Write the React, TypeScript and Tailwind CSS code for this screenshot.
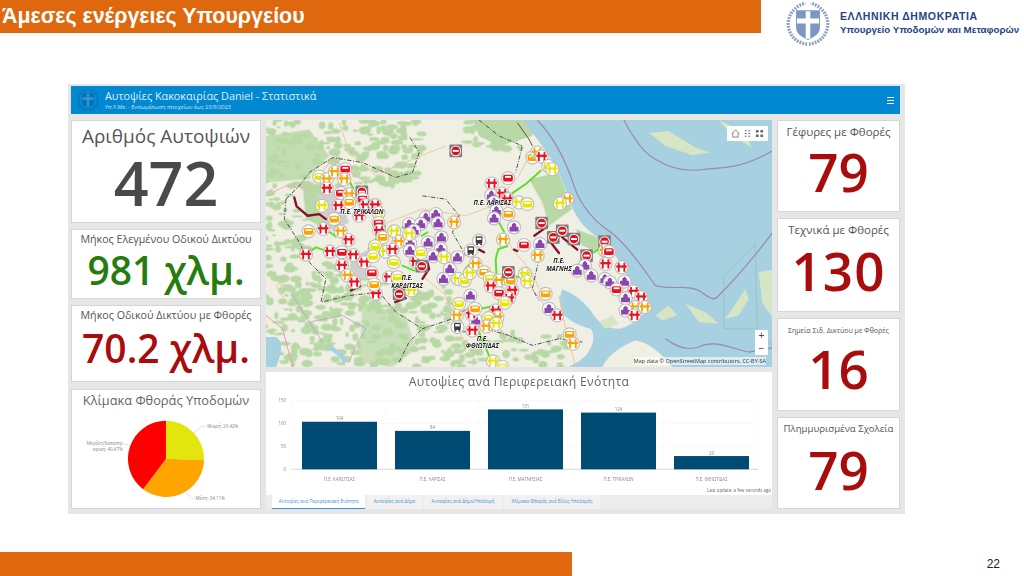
import React from 'react';

const sans = "font-['Open_Sans','Noto_Sans',sans-serif]";

// [x, y, type] in map pixels x3 (r bridge, R closed road, y yellow, o orange, p purple school, g bus)
const MARKERS: [number, number, string][] = [
  [160,182,'y'],[182,190,'o'],[207,168,'o'],[238,160,'r'],[235,190,'o'],[183,218,'r'],[225,232,'r'],[250,235,'o'],[288,228,'R'],[290,250,'r'],
  [168,270,'y'],[218,270,'r'],[250,260,'o'],[300,268,'r'],[328,268,'r'],[205,310,'o'],[338,292,'y'],[280,300,'r'],[128,347,'o'],[172,340,'r'],
  [224,347,'o'],[338,322,'r'],[340,345,'r'],[385,347,'y'],[350,365,'o'],[248,373,'r'],[398,378,'o'],[328,392,'y'],[192,408,'r'],[120,417,'r'],
  [228,410,'r'],[262,418,'r'],[295,440,'r'],[322,422,'y'],[360,408,'y'],[380,402,'r'],[384,440,'y'],[228,450,'r'],[245,480,'o'],[318,472,'r'],
  [370,485,'r'],[265,500,'r'],[395,485,'y'],[400,535,'R'],[330,535,'r'],[325,507,'o'],[437,525,'y'],[450,438,'r'],[468,452,'R'],
  [430,325,'p'],[480,305,'p'],[510,295,'p'],[517,322,'p'],[465,325,'p'],[445,345,'p'],[433,383,'p'],[487,380,'p'],[527,365,'p'],[432,405,'p'],
  [525,400,'p'],[502,422,'p'],[575,425,'p'],[552,460,'p'],[533,490,'p'],[614,540,'p'],[630,615,'p'],
  [465,412,'y'],[535,425,'y'],[577,490,'y'],[597,495,'y'],[612,473,'y'],[630,445,'o'],[655,470,'o'],[565,320,'o'],[430,355,'y'],[640,375,'g'],[615,405,'g'],
  [570,105,'R'],[800,125,'o'],[815,110,'o'],[828,122,'r'],[848,150,'y'],[860,160,'y'],[678,203,'r'],[727,187,'r'],[677,238,'p'],[710,233,'r'],
  [685,260,'p'],[725,250,'r'],[760,260,'y'],[785,265,'y'],[692,285,'p'],[685,308,'p'],[728,295,'o'],[905,250,'o'],[883,263,'y'],
  [828,322,'R'],[745,335,'p'],[712,372,'o'],[775,388,'r'],[823,385,'p'],[816,420,'o'],[863,365,'R'],[890,345,'R'],[925,370,'R'],[963,420,'R'],
  [1017,378,'R'],[1018,405,'o'],[1030,408,'r'],[1020,445,'r'],[1068,455,'r'],[958,450,'p'],[935,465,'p'],[977,480,'p'],[1018,490,'p'],[1033,500,'p'],
  [1077,498,'p'],[1053,522,'r'],[1105,528,'r'],[1127,545,'r'],[1080,548,'p'],[1110,575,'o'],[1138,575,'o'],[1080,585,'p'],[1107,600,'r'],
  [778,475,'y'],[672,488,'y'],[700,495,'o'],[785,498,'y'],[735,495,'o'],[728,470,'R'],[675,512,'r'],[700,533,'r'],[740,525,'r'],[730,548,'r'],
  [717,562,'y'],[690,585,'r'],[695,605,'o'],[668,608,'y'],[662,633,'o'],[692,625,'y'],[840,535,'o'],[850,580,'p'],[875,600,'r'],[580,565,'y'],
  [573,600,'o'],[617,595,'r'],[628,580,'o'],[620,645,'r'],[575,635,'g'],[912,657,'o'],[922,685,'o'],[682,738,'y'],[710,755,'y'],
];

const MARKER_COLORS: Record<string, string> = { r: '#f00f1c', R: '#e0101c', y: '#e6e600', o: '#fca400', p: '#8e44ad', g: '#3c3c3c' };

const GREEN_LINES = [
  'M250 195 L262 218', 'M345 310 L358 332', 'M332 368 L308 398', 'M135 405 L150 395 L178 405', 'M185 345 L210 362', 'M410 335 L425 342',
  'M410 450 L445 465', 'M468 360 L485 350', 'M598 460 L610 448', 'M692 472 L690 430 L698 400 L725 392', 'M700 320 L715 348', 'M740 232 L780 205 L825 165',
  'M720 478 L762 485', 'M645 580 L680 572', 'M640 650 L672 725', 'M985 410 L1000 400', 'M1098 550 L1110 540',
];

const RED_LINES = [
  'M85 245 L92 272 L125 300 L160 295 L180 310', 'M255 525 L282 512', 'M388 560 L420 548', 'M806 360 L845 332', 'M855 380 L880 412',
  'M890 365 L935 402', 'M485 440 L490 460 L470 490', 'M640 402 L655 410', 'M745 402 L755 406',
];

// forest specks, same every render
function makePatches() {
  let seed = 7;
  const rnd = () => {
    seed = (seed * 16807) % 2147483647;
    return seed / 2147483647;
  };
  const areas = [
    { x: 0, y: 12, w: 470, h: 200, n: 170 },
    { x: 0, y: 200, w: 130, h: 300, n: 70 },
    { x: 0, y: 500, w: 560, h: 255, n: 260 },
    { x: 600, y: 12, w: 200, h: 90, n: 50 },
    { x: 560, y: 640, w: 350, h: 115, n: 50 },
    { x: 130, y: 440, w: 170, h: 90, n: 40 },
  ];
  const out: { x: number; y: number; rx: number; ry: number }[] = [];
  for (const a of areas) {
    for (let i = 0; i < a.n; i++) {
      out.push({ x: a.x + rnd() * a.w, y: a.y + rnd() * a.h, rx: 5 + rnd() * 14, ry: 3 + rnd() * 9 });
    }
  }
  return out;
}
const PATCHES = makePatches();

function MapMarker({ x, y, type, i }: { x: number; y: number; type: string; i: number }) {
  const c = MARKER_COLORS[type];
  if (type === 'R') {
    return (
      <g>
        <rect x={x - 19} y={y - 19} width="38" height="38" rx="3" fill="#7e7e7e" />
        <circle cx={x} cy={y} r="16" fill="#fff" />
        <circle cx={x} cy={y} r="13" fill={c} />
        <rect x={x - 9} y={y - 3} width="18" height="6" fill="#fff" />
      </g>
    );
  }
  const carStyle = type !== 'p' && type !== 'g' && i % 3 === 0;
  return (
    <g transform={`translate(${x} ${y}) scale(1.12)`}>
      <circle r="19" fill="#bdbdbd" />
      <circle r="16" fill="#fff" />
      {type === 'p' && (
        <path d="M-12 11 v-13 h6 v-6 l6 -5 l6 5 v6 h6 v13 z" fill={c} />
      )}
      {type === 'g' && (
        <g>
          <rect x="-9" y="-12" width="18" height="20" rx="3" fill={c} />
          <rect x="-6" y="-8" width="12" height="6" fill="#fff" />
          <rect x="-8" y="8" width="5" height="4" fill={c} />
          <rect x="3" y="8" width="5" height="4" fill={c} />
        </g>
      )}
      {carStyle && (
        <g>
          <rect x="-13" y="-9" width="26" height="18" rx="5" fill={c} />
          <rect x="-8" y="-6" width="16" height="5" fill="#fff" />
        </g>
      )}
      {type !== 'p' && type !== 'g' && !carStyle && (
        <g fill={c}>
          <rect x="-14" y="-5" width="28" height="6" />
          <rect x="-10" y="-12" width="5" height="24" />
          <rect x="5" y="-12" width="5" height="24" />
        </g>
      )}
    </g>
  );
}

function ThessalyMap() {
  return (
    <svg viewBox="0 12 1520 743" preserveAspectRatio="none" className="w-full h-full block blur-[0.5px]">
      <defs>
        <filter id="soft"><feGaussianBlur stdDeviation="2" /></filter>
      </defs>
      <rect x="0" y="0" width="1530" height="770" fill="#f0efe4" />
      {/* forests */}
      <g fill="#b8d8a6" filter="url(#soft)">
        <path d="M110 210 L180 200 L240 320 L180 340 L120 310 Z" />
        <path d="M0 60 L130 40 L190 120 L120 190 L0 200 Z" opacity="0.8" />
        <path d="M620 12 L770 12 L800 60 L700 90 L640 60 Z" />
        <path d="M790 190 L880 170 L920 280 L850 330 L830 260 Z" />
        <path d="M930 340 L1010 370 L1000 410 L950 390 Z" />
        <path d="M290 560 L420 600 L450 700 L380 755 L280 740 Z" opacity="0.7" />
        {PATCHES.map((p, i) => <ellipse key={i} cx={p.x} cy={p.y} rx={p.rx} ry={p.ry} />)}
      </g>
      {/* sea */}
      <path
        d="M770 12 C800 50 850 110 880 170 C900 220 915 260 925 285 C945 330 985 360 1010 372 C1040 395 1075 460 1100 510 C1120 540 1150 560 1150 572 C1140 600 1090 635 1060 640 C1030 640 1000 622 985 600 C965 565 920 530 890 522 C880 545 880 570 890 590 C905 615 945 632 975 640 C990 660 985 690 960 722 C940 740 920 748 910 755 L1530 755 L1530 12 Z"
        fill="#a7d0e0"
      />
      <path d="M1010 755 C1030 715 1070 690 1110 675 C1150 680 1190 715 1220 755 Z" fill="#f0efe4" />
      <path d="M0 665 L30 665 C55 680 45 720 30 755 L0 755 Z" fill="#a7d0e0" />
      <path d="M185 690 C210 695 225 710 240 725 L235 755 L225 730 C210 715 195 705 185 700 Z" fill="#a7d0e0" />
      {/* islands */}
      <g fill="#d6e5c4">
        <path d="M1150 50 L1210 45 L1290 95 L1335 110 L1280 118 L1200 90 Z" />
        <path d="M1360 12 L1440 50 L1460 95 L1400 60 Z" />
        <path d="M1260 565 L1320 590 L1360 625 L1300 620 Z" />
        <path d="M1170 600 L1210 570 L1235 600 L1190 615 Z" />
        <path d="M1380 610 L1440 520 L1450 550 L1420 600 Z" />
        <path d="M1000 620 L1040 600 L1060 625 L1020 640 Z" />
        <path d="M1480 470 L1530 460 L1530 620 L1490 560 Z" />
      </g>
      {/* sea boundaries */}
      <g fill="none" stroke="#9c86b6" strokeWidth="3.5">
        <path d="M815 12 C860 60 900 130 925 210 C945 270 990 320 1030 345 C1090 390 1140 470 1170 510 C1210 525 1260 505 1300 525 C1330 545 1345 560 1360 540 C1410 490 1470 420 1530 340" />
        <path d="M1075 12 C1100 60 1130 110 1170 130 C1210 155 1260 170 1320 160 C1370 155 1430 160 1530 100" />
        <path d="M1200 670 C1240 700 1270 705 1300 695 C1350 670 1400 700 1450 710 L1530 695" />
      </g>
      <path d="M1375 480 L1470 385 L1475 640 L1375 640 Z M1475 640 L1530 700" fill="none" stroke="#8fb8a0" strokeWidth="1.5" />
      {/* roads */}
      <g fill="none" stroke="#efc7a0" strokeWidth="3">
        <path d="M0 240 L60 210 L130 215 L200 130 L300 200" stroke="#eeb0a8" />
        <path d="M340 330 L470 280 L600 300 L680 270 L760 180 L800 100" />
        <path d="M700 320 L740 400 L800 470 L820 520" />
        <path d="M470 480 L540 540 L560 610 L620 720" />
        <path d="M0 600 L50 640 L80 755" stroke="#e8a0a8" />
        <path d="M880 540 L900 640 L930 755" />
        <path d="M220 20 L250 110 L330 180 L440 130 L540 90" />
        <path d="M90 480 L30 510 L60 560" />
        <path d="M860 600 L800 520" />
      </g>
      <g fill="none" stroke="#b5a8c4" strokeWidth="2.5">
        <path d="M130 620 L230 600 L300 640 L270 690 L250 740" />
        <path d="M80 540 L130 620 L170 680" />
      </g>
      {/* region borders */}
      <g fill="none" stroke="#4d4d4d" strokeWidth="3" strokeDasharray="13 5 3 5">
        <path d="M60 250 L100 210 L130 170 L200 125 L290 140 L390 185 L440 170 L460 110 L430 60" />
        <path d="M60 250 L55 310 L100 380 L130 440 L180 490 L165 560 L250 540 L340 530 L390 590 L470 640 L560 610 L630 560" />
        <path d="M470 240 L540 250 L580 300 L560 350 L600 420" />
        <path d="M640 12 L700 60 L770 90 L750 170" />
        <path d="M560 610 L590 650 L660 640 L730 660 L800 690 L880 670 L950 680" />
        <path d="M400 740 L430 680 L470 640" />
        <path d="M820 430 L800 520 L820 555" />
      </g>
      <path d="M755 20 L790 70 L800 90" fill="none" stroke="#6b4a4a" strokeWidth="3" />
      {/* gray urban areas */}
      <g fill="#cfcfcf">
        <path d="M150 240 L210 225 L250 320 L200 345 L165 300 Z" />
        <path d="M250 430 L310 400 L320 480 L270 490 Z" />
      </g>
      <g fill="none" stroke="#5de02a" strokeWidth="6" strokeLinecap="round">
        {GREEN_LINES.map((d) => <path key={d} d={d} />)}
      </g>
      <g fill="none" stroke="#8a0f2c" strokeWidth="7" strokeLinecap="round" strokeLinejoin="round">
        {RED_LINES.map((d) => <path key={d} d={d} />)}
      </g>
      {MARKERS.map(([x, y, type], i) => <MapMarker key={i} x={x} y={y} type={type} i={i} />)}
      <g fontFamily="'Open Sans', sans-serif" fontSize="19" fontWeight="700" fontStyle="italic" fill="#222" textAnchor="middle" stroke="#fff" strokeWidth="3" paintOrder="stroke">
        <text x="288" y="296">Π.Ε. ΤΡΙΚΑΛΩΝ</text>
        <text x="680" y="268">Π.Ε. ΛΑΡΙΣΑΣ</text>
        <text x="880" y="443">Π.Ε.</text>
        <text x="880" y="466">ΜΑΓΝΗΣ</text>
        <text x="424" y="493">Π.Ε.</text>
        <text x="424" y="516">ΚΑΡΔΙΤΣΑΣ</text>
        <text x="650" y="676">Π.Ε.</text>
        <text x="650" y="699">ΦΘΙΩΤΙΔΑΣ</text>
      </g>
    </svg>
  );
}

function EmblemLogo({ size, wreath, shield, cross }: { size: number; wreath: string; shield: string; cross: string }) {
  return (
    <svg width={size} height={size} viewBox="0 0 48 48" className="shrink-0">
      <g fill="none" stroke={wreath} strokeWidth="3.6" strokeDasharray="2 1.2">
        <path d="M23 46 C8 44 2 33 2.5 22 C3 12 12 3 21 1.5" />
        <path d="M25 46 C40 44 46 33 45.5 22 C45 12 36 3 27 1.5" />
      </g>
      <path d="M11 9 H37 V28 C37 35 30 38 24 41.5 C18 38 11 35 11 28 Z" fill={shield} />
      <path d="M21.5 10 H26.5 V18 H36 V23.5 H26.5 V40 H21.5 V23.5 H12 V18 H21.5 Z" fill={cross} />
    </svg>
  );
}

function StatCard({ title, value, titleClass, valueClass, heightClass }: {
  title: string; value: string; titleClass: string; valueClass: string; heightClass: string;
}) {
  return (
    <div className={`bg-white border border-[#d6d6d6] flex flex-col items-center overflow-hidden whitespace-nowrap ${heightClass}`}>
      <div className={`text-[#555] ${sans} ${titleClass}`}>{title}</div>
      <div className={`font-['Open_Sans',sans-serif] font-semibold ${valueClass}`}>{value}</div>
    </div>
  );
}

function DamagePie() {
  // slices from the top, clockwise: yellow, orange, red
  const cx = 95, cy = 70, r = 38.7;
  const pt = (deg: number) => {
    const a = ((deg - 90) * Math.PI) / 180;
    return `${(cx + r * Math.cos(a)).toFixed(2)} ${(cy + r * Math.sin(a)).toFixed(2)}`;
  };
  const slice = (a: number, b: number) => `M${cx} ${cy} L${pt(a)} A${r} ${r} 0 ${b - a > 180 ? 1 : 0} 1 ${pt(b)} Z`;
  return (
    <svg viewBox="0 0 190 120" className="absolute inset-0 w-full h-full">
      <path d={slice(0, 92)} fill="#e3e60c" />
      <path d={slice(92, 217)} fill="#ffa500" />
      <path d={slice(217, 360)} fill="#ff0000" />
      <g fill="none" stroke="#ccc" strokeWidth="0.6">
        <path d="M123 44 L131 37 L136 37" />
        <path d="M115 103 L120 110 L124 110" />
        <path d="M57 56 L52 55" />
      </g>
      <g fontFamily="'Open Sans', sans-serif" fontSize="4.6" fill="#888">
        <text x="137" y="39">Μικρή: 26.42%</text>
        <text x="125" y="112">Μέση: 34.11%</text>
        <text x="51" y="56" textAnchor="end">Μεγάλη/Καταστρ</text>
        <text x="51" y="62" textAnchor="end">οφική: 40.47%</text>
      </g>
    </svg>
  );
}

const BARS = [
  { label: 'Π.Ε. ΚΑΡΔΙΤΣΑΣ', value: 104, x: 36 },
  { label: 'Π.Ε. ΛΑΡΙΣΑΣ', value: 84, x: 129 },
  { label: 'Π.Ε. ΜΑΓΝΗΣΙΑΣ', value: 131, x: 222 },
  { label: 'Π.Ε. ΤΡΙΚΑΛΩΝ', value: 124, x: 315 },
  { label: 'Π.Ε. ΦΘΙΩΤΙΔΑΣ', value: 29, x: 408 },
];

function BarChart() {
  const base = 97.3;
  const scale = 68.6 / 150;
  return (
    <svg viewBox="0 0 506 123" className="absolute inset-0 w-full h-full">
      <g stroke="#ececec" strokeWidth="0.6">
        {[28.7, 51.6, 74.4].map((y) => <line key={y} x1="25" x2="492" y1={y} y2={y} strokeDasharray="1 1" />)}
        {[25, 119, 212, 305, 398, 492].map((x) => <line key={x} x1={x} x2={x} y1="28.7" y2={base} strokeDasharray="1 1" />)}
      </g>
      <line x1="25" x2="492" y1={base} y2={base} stroke="#bbb" strokeWidth="0.6" />
      <g fontFamily="'Open Sans', sans-serif" fontSize="4.4" fill="#888">
        {[[150, 28.7], [100, 51.6], [50, 74.4], [0, 97.3]].map(([t, y]) => (
          <text key={t} x="20" y={y + 1.5} textAnchor="end">{t}</text>
        ))}
        {BARS.map((b) => (
          <g key={b.label}>
            <rect x={b.x} y={base - b.value * scale} width="75" height={b.value * scale} fill="#004b73" />
            <text x={b.x + 37.5} y={base - b.value * scale - 1.5} textAnchor="middle">{b.value}</text>
            <text x={b.x + 37.5} y="108.5" textAnchor="middle">{b.label}</text>
          </g>
        ))}
        <text x="505" y="120" textAnchor="end" fill="#666">Last update: a few seconds ago</text>
      </g>
    </svg>
  );
}

const TABS = [
  { label: 'Αυτοψίες ανά Περιφερειακή Ενότητα', w: 'w-[93px]', active: true },
  { label: 'Αυτοψίες ανά Δήμο', w: 'w-[55px]', active: false },
  { label: 'Αυτοψίες ανά Δήμο/Υποδομή', w: 'w-[78px]', active: false },
  { label: 'Κλίμακα Φθοράς ανά Είδος Υποδομής', w: 'w-[96px]', active: false },
];

export default function App() {
  return (
    <div className="w-[1024px] h-[576px] bg-white overflow-hidden flex flex-col relative font-['Liberation_Sans',sans-serif]">
      {/* Slide header */}
      <div className="flex h-[84px] shrink-0">
        <div className="w-[761px] h-[33px] shrink-0 bg-[#df680f] text-white text-[21.4px] font-bold leading-[33px] pl-[2px]">
          Άμεσες ενέργειες Υπουργείου
        </div>
        <div className="flex items-start pl-[25px] pt-[2px]">
          <EmblemLogo size={44} wreath="#8fa0bd" shield="#7d97c4" cross="#fff" />
          <div className="pl-[10px] pt-[8px] whitespace-nowrap text-[#24457f]">
            <div className="text-[10.5px] leading-[13px] tracking-[0.6px] font-bold">ΕΛΛΗΝΙΚΗ ΔΗΜΟΚΡΑΤΙΑ</div>
            <div className="text-[9.8px] leading-[13px] font-bold">Υπουργείο Υποδομών και Μεταφορών</div>
          </div>
        </div>
      </div>

      {/* Dashboard */}
      <div className="ml-[68px] w-[837px] h-[430px] bg-[#e6e6e6] pt-[2px] pl-[3px] shrink-0">
        <div className="w-[829px] h-[28px] bg-[#0288d1] flex items-center text-white relative">
          <div className="pl-[6px] pr-[6px]">
            <EmblemLogo size={22} wreath="#0b6fb4" shield="#0b6fb4" cross="#2f97d8" />
          </div>
          <div className={`${sans} flex-1`}>
            <div className="text-[10.8px] leading-[14px] text-[#dcefff]">Αυτοψίες Κακοκαιρίας Daniel - Στατιστικά</div>
            <div className="text-[5.5px] leading-[8px] text-[#cfe6f7]">Υπ.Υ.Με. - Ενσωμάτωση στοιχείων έως 23/9/2023</div>
          </div>
          <div className="w-[7px] mr-[6px] flex flex-col gap-[2px]">
            <div className="h-px bg-white" />
            <div className="h-px bg-white" />
            <div className="h-px bg-white" />
          </div>
        </div>

        <div className="flex gap-[5px] mt-[6px]">
          {/* Left column */}
          <div className="w-[190px] flex flex-col gap-[6px]">
            <StatCard title="Αριθμός Αυτοψιών" value="472" heightClass="h-[103px]" titleClass="text-[19px] leading-[28px] pt-[1px]" valueClass="text-[61px] leading-[66px] text-[#4a4a4a]" />
            <StatCard title="Μήκος Ελεγμένου Οδικού Δικτύου" value="981 χλμ." heightClass="h-[70px]" titleClass="text-[10.7px] leading-[14px] pt-[2px]" valueClass="text-[39px] leading-[46px] text-[#267c0c] mt-[1px]" />
            <StatCard title="Μήκος Οδικού Δικτύου με Φθορές" value="70.2 χλμ." heightClass="h-[77px]" titleClass="text-[10.7px] leading-[14px] pt-[2px]" valueClass="text-[39px] leading-[46px] text-[#a80c0c] mt-[3px]" />
            <div className="relative h-[120px] bg-white border border-[#d6d6d6] mt-px">
              <div className={`relative text-center text-[#666] text-[12.8px] leading-[18px] pt-[1px] ${sans}`}>Κλίμακα Φθοράς Υποδομών</div>
              <DamagePie />
            </div>
          </div>

          {/* Center column */}
          <div className="w-[506px] flex flex-col">
            <div className="relative h-[247px] overflow-hidden bg-[#a7d0e0]">
              <ThessalyMap />
              <div className="absolute top-[6px] right-[4px] w-[41px] h-[15px] bg-white flex items-center justify-around px-[2px]">
                <svg width="9" height="9" viewBox="0 0 10 10" fill="none" stroke="#555" strokeWidth="0.8"><path d="M1 5 L5 1 L9 5 M2 4.5 V9 H8 V4.5" /></svg>
                <svg width="9" height="9" viewBox="0 0 10 10" fill="none" stroke="#555" strokeWidth="1"><path d="M2 2 H4 M2 5 H4 M2 8 H4 M6 2 H8 M6 5 H8 M6 8 H8" /></svg>
                <svg width="9" height="9" viewBox="0 0 10 10" fill="#666"><path d="M1 1 H4 V4 H1 Z M6 1 H9 V4 H6 Z M1 6 H4 V9 H1 Z M6 6 H9 V9 H6 Z" /></svg>
              </div>
              <div className="absolute right-[4px] bottom-[12px] w-[13px] h-[25px] bg-white flex flex-col items-center justify-around text-[#444] text-[10px] leading-[10px]">
                <span>+</span>
                <span>−</span>
              </div>
              <div className={`absolute right-[6px] bottom-[2px] text-[5.5px] leading-[8px] text-[#333] bg-white/60 ${sans}`}>
                Map data © OpenStreetMap contributors, CC-BY-SA
              </div>
            </div>

            <div className="relative h-[123px] mt-[5px] bg-white">
              <div className={`relative text-center text-[#666] text-[12.2px] leading-[20px] tracking-[0.3px] ${sans}`}>Αυτοψίες ανά Περιφερειακή Ενότητα</div>
              <BarChart />
            </div>
            <div className={`h-[14px] flex gap-[2px] pl-[6px] bg-[#ececec] ${sans}`}>
              {TABS.map((t) => (
                <div
                  key={t.label}
                  className={`${t.w} text-center text-[4.6px] leading-[12px] text-[#3f93cc] whitespace-nowrap ${t.active ? 'bg-white border-b border-[#3f93cc]' : 'bg-[#f1f1f1]'}`}
                >
                  {t.label}
                </div>
              ))}
            </div>
          </div>

          {/* Right column */}
          <div className="w-[123px] flex flex-col gap-[6px]">
            <StatCard title="Γέφυρες με Φθορές" value="79" heightClass="h-[92px]" titleClass="text-[11.5px] leading-[16px] pt-[3px]" valueClass="text-[53px] leading-[60px] text-[#a80c0c] mt-[2px]" />
            <StatCard title="Τεχνικά με Φθορές" value="130" heightClass="h-[94px]" titleClass="text-[11.5px] leading-[16px] pt-[3px]" valueClass="text-[53px] leading-[60px] tracking-[1px] text-[#a80c0c] mt-[3px]" />
            <StatCard title="Σημεία Σιδ. Δικτύου με Φθορές" value="16" heightClass="h-[93px]" titleClass="text-[7px] leading-[12px] pt-[6px]" valueClass="text-[53px] leading-[60px] text-[#a80c0c] mt-[2px]" />
            <StatCard title="Πλημμυρισμένα Σχολεία" value="79" heightClass="h-[92px]" titleClass="text-[9.6px] leading-[16px] pt-[3px]" valueClass="text-[53px] leading-[60px] text-[#a80c0c] mt-[3px]" />
          </div>
        </div>
      </div>

      {/* Slide footer */}
      <div className="flex items-center justify-between mt-[38px] h-[24px] shrink-0">
        <div className="w-[572px] h-[24px] bg-[#df680f]" />
        <div className="pr-[24px] text-[12px] text-[#222]">22</div>
      </div>
    </div>
  );
}
